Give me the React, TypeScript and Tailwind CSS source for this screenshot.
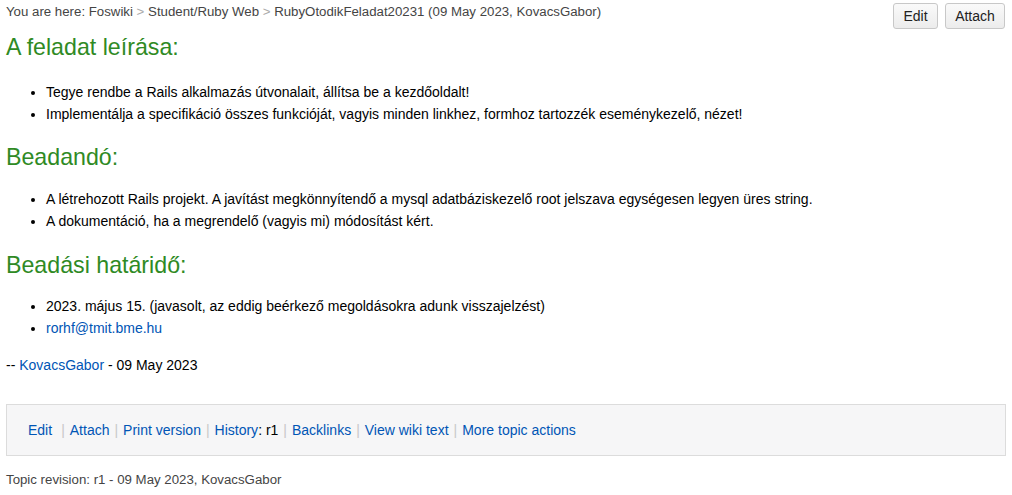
import React from "react";

const link = "text-[#0055b5] hover:underline";

function Sep() {
  return <span className="text-[#c8c8c8] mx-[5px]">|</span>;
}

export default function App() {
  return (
    <div className="min-h-[495px] bg-white px-[6px] text-[14px] text-black" style={{ fontFamily: '"Liberation Sans", Arial, sans-serif' }}>
      <div className="flex items-start justify-between pt-[3px]">
        <div className="text-[13.25px] leading-[18px] text-[#444]">
          You are here: Foswiki <span className="text-[#aaa]">&gt;</span> Student/Ruby Web{" "}
          <span className="text-[#aaa]">&gt;</span> RubyOtodikFeladat20231 (09 May 2023, KovacsGabor)
        </div>
        <div className="flex gap-[7px] mr-[1px]">
          <button className="h-[26px] w-[45px] rounded-[3px] border border-[#c8c8c8] bg-gradient-to-b from-[#fafafa] to-[#ececec] text-[14px] text-[#222]">
            Edit
          </button>
          <button className="h-[26px] w-[60px] rounded-[3px] border border-[#c8c8c8] bg-gradient-to-b from-[#fafafa] to-[#ececec] text-[14px] text-[#222]">
            Attach
          </button>
        </div>
      </div>

      <h2 className="mt-[4px] text-[23.2px] leading-[28px] text-[#2f8a24]">A feladat leírása:</h2>
      <ul className="mt-[20px] list-disc pl-[40px] leading-[22px]">
        <li>Tegye rendbe a Rails alkalmazás útvonalait, állítsa be a kezdőoldalt!</li>
        <li>Implementálja a specifikáció összes funkcióját, vagyis minden linkhez, formhoz tartozzék eseménykezelő, nézet!</li>
      </ul>

      <h2 className="mt-[18px] text-[23.2px] leading-[28px] text-[#2f8a24]">Beadandó:</h2>
      <ul className="mt-[17px] list-disc pl-[40px] leading-[22px]">
        <li>A létrehozott Rails projekt. A javítást megkönnyítendő a mysql adatbáziskezelő root jelszava egységesen legyen üres string.</li>
        <li>A dokumentáció, ha a megrendelő (vagyis mi) módosítást kért.</li>
      </ul>

      <h2 className="mt-[19px] text-[23.2px] leading-[28px] text-[#2f8a24]">Beadási határidő:</h2>
      <ul className="mt-[16px] list-disc pl-[40px] leading-[22px]">
        <li>2023. május 15. (javasolt, az eddig beérkező megoldásokra adunk visszajelzést)</li>
        <li>
          <a className={link}>rorhf@tmit.bme.hu</a>
        </li>
      </ul>

      <p className="mt-[15px] leading-[22px]">
        -- <a className={link}>KovacsGabor</a> - 09 May 2023
      </p>

      <div className="mt-[28px] flex h-[52px] items-center border border-[#dcdcdc] bg-[#f6f6f7] pl-[21px]">
        <span>
          <a className={link}>Edit</a>
          <span className="ml-[4px]" />
          <Sep />
          <a className={link}>Attach</a>
          <Sep />
          <a className={link}>Print version</a>
          <Sep />
          <a className={link}>History</a>: r1
          <Sep />
          <a className={link}>Backlinks</a>
          <Sep />
          <a className={link}>View wiki text</a>
          <Sep />
          <a className={link}>More topic actions</a>
        </span>
      </div>

      <p className="mt-[15px] text-[13.25px] leading-[18px] text-[#444]">Topic revision: r1 - 09 May 2023, KovacsGabor</p>
    </div>
  );
}
